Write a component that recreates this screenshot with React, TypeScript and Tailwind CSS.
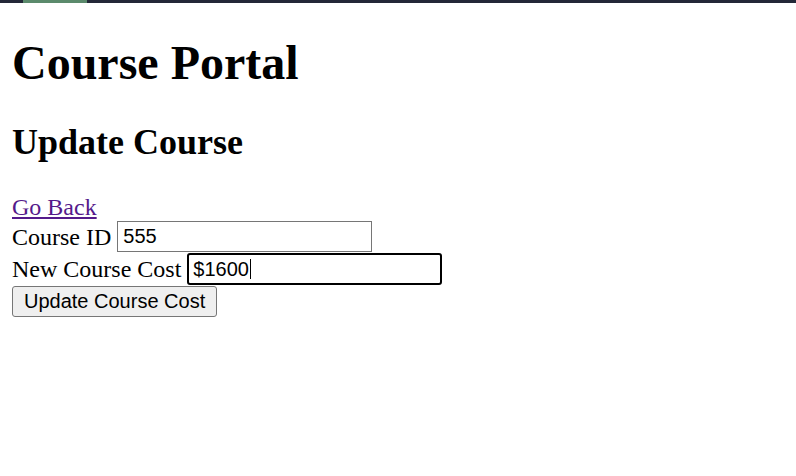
import React from "react";

export default function App() {
  const sans = { fontFamily: '"Liberation Sans", Arial, sans-serif' };
  return (
    <div className="min-h-[476px] bg-white text-black" style={{ fontFamily: '"Liberation Serif", "Times New Roman", serif' }}>
      <div className="flex h-[3px] bg-[#232838]">
        <div className="ml-[23px] w-[64px] bg-[#5b8a6c]" />
      </div>
      <div className="px-[12px] pt-[1px]">
        <h1 className="mt-[31px] mb-[32px] text-[48px] font-bold leading-[55px]">Course Portal</h1>
        <h2 className="mt-[30px] mb-[30px] text-[36px] font-bold leading-[41px]">Update Course</h2>
        <div className="text-[24px] leading-[28px]">
          <a href="#" className="text-[#551a8b] underline">Go Back</a>
        </div>
        <form className="text-[24px] leading-[28px]" onSubmit={(e) => e.preventDefault()}>
          <div className="flex items-start h-[32px]">
            <label className="self-center">Course ID</label>
            <input
              readOnly
              value="555"
              className="ml-[6px] w-[255px] h-[31px] border border-[#767676] px-[5px] text-[20px] outline-none"
              style={sans}
            />
          </div>
          <div className="flex items-center h-[32px]">
            <label>New Course Cost</label>
            <div
              className="ml-[6px] w-[255px] h-[32px] border-2 border-black rounded-[3px] pl-[4px] text-[20px] leading-[28px] flex items-center"
              style={sans}
            >
              <span>$1600</span>
              <span className="ml-[1px] inline-block w-[1px] h-[20px] bg-black" />
            </div>
          </div>
          <div className="mt-[1px]">
            <button
              type="submit"
              className="h-[31px] px-[11px] bg-[#efefef] border border-[#767676] rounded-[3px] text-[20px] leading-[23px]"
              style={sans}
            >
              Update Course Cost
            </button>
          </div>
        </form>
      </div>
    </div>
  );
}
